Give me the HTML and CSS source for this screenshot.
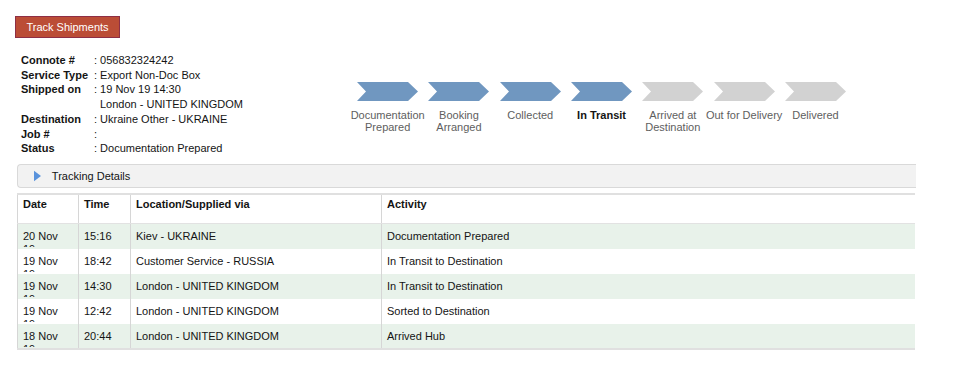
FILE: index.html
```html
<!DOCTYPE html>
<html>
<head>
  <title>Track Shipments</title>
  <link rel="stylesheet" href="styles.css">
</head>
<body>

  <button class="track-btn">Track Shipments</button>

  <div class="summary">
    <table class="info">
      <tr><th>Connote #</th><td>: 056832324242</td></tr>
      <tr><th>Service Type</th><td>: Export Non-Doc Box</td></tr>
      <tr><th>Shipped on</th><td>: 19 Nov 19 14:30<br><span class="indent">London - UNITED KINGDOM</span></td></tr>
      <tr><th>Destination</th><td>: Ukraine Other - UKRAINE</td></tr>
      <tr><th>Job #</th><td>:</td></tr>
      <tr><th>Status</th><td>: Documentation Prepared</td></tr>
    </table>

    <div class="progress">
      <div class="step done">
        <svg viewBox="0 0 61 19" width="61" height="19"><polygon points="0,0 51,0 61,9.5 51,19 0,19 9,9.5"/></svg>
        <span>Documentation<br>Prepared</span>
      </div>
      <div class="step done">
        <svg viewBox="0 0 61 19" width="61" height="19"><polygon points="0,0 51,0 61,9.5 51,19 0,19 9,9.5"/></svg>
        <span>Booking<br>Arranged</span>
      </div>
      <div class="step done">
        <svg viewBox="0 0 61 19" width="61" height="19"><polygon points="0,0 51,0 61,9.5 51,19 0,19 9,9.5"/></svg>
        <span>Collected</span>
      </div>
      <div class="step done current">
        <svg viewBox="0 0 61 19" width="61" height="19"><polygon points="0,0 51,0 61,9.5 51,19 0,19 9,9.5"/></svg>
        <span>In Transit</span>
      </div>
      <div class="step">
        <svg viewBox="0 0 61 19" width="61" height="19"><polygon points="0,0 51,0 61,9.5 51,19 0,19 9,9.5"/></svg>
        <span>Arrived at<br>Destination</span>
      </div>
      <div class="step">
        <svg viewBox="0 0 61 19" width="61" height="19"><polygon points="0,0 51,0 61,9.5 51,19 0,19 9,9.5"/></svg>
        <span>Out for Delivery</span>
      </div>
      <div class="step">
        <svg viewBox="0 0 61 19" width="61" height="19"><polygon points="0,0 51,0 61,9.5 51,19 0,19 9,9.5"/></svg>
        <span>Delivered</span>
      </div>
    </div>
  </div>

  <div class="details-bar">
    <svg class="toggle" viewBox="0 0 8 12" width="7" height="12"><polygon points="0,0 8,6 0,12"/></svg>
    Tracking Details
  </div>

  <table class="history">
    <thead>
      <tr><th class="c-date">Date</th><th class="c-time">Time</th><th class="c-loc">Location/Supplied via</th><th>Activity</th></tr>
    </thead>
    <tbody>
      <tr><td><div class="clip">20 Nov 19</div></td><td>15:16</td><td>Kiev - UKRAINE</td><td>Documentation Prepared</td></tr>
      <tr><td><div class="clip">19 Nov 19</div></td><td>18:42</td><td>Customer Service - RUSSIA</td><td>In Transit to Destination</td></tr>
      <tr><td><div class="clip">19 Nov 19</div></td><td>14:30</td><td>London - UNITED KINGDOM</td><td>In Transit to Destination</td></tr>
      <tr><td><div class="clip">19 Nov 19</div></td><td>12:42</td><td>London - UNITED KINGDOM</td><td>Sorted to Destination</td></tr>
      <tr><td><div class="clip">18 Nov 19</div></td><td>20:44</td><td>London - UNITED KINGDOM</td><td>Arrived Hub</td></tr>
    </tbody>
  </table>

</body>
</html>
```

FILE: styles.css
```css
body {
  font-family: "Liberation Sans", Arial, sans-serif;
  font-size: 11px;
  color: #141414;
  background: white;
  margin: 0;
  padding: 16px 0 0 15px;
}
.track-btn {
  display: block;
  font-family: inherit;
  font-size: 11px;
  color: white;
  background: #bb4d36;
  border: 1px solid #8e2f45;
  height: 22px;
  width: 105px;
  padding: 0;
  cursor: pointer;
}
.summary {
  display: flex;
  margin-top: 15px;
}
.info {
  border-collapse: collapse;
  margin-left: 6px;
  width: 331px;
  align-self: flex-start;
}
.info th, .info td {
  padding: 0;
  line-height: 14.7px;
  text-align: left;
  vertical-align: top;
  white-space: nowrap;
}
.info th {
  width: 73px;
  font-weight: bold;
}
.info .indent {
  padding-left: 6px;
}
.progress {
  display: flex;
  margin-top: 29px;
}
.step {
  width: 71.3px;
  display: flex;
  flex-direction: column;
  align-items: center;
  text-align: center;
  font-size: 11px;
  line-height: 12px;
  color: #5e5e5e;
  white-space: nowrap;
}
.step svg {
  fill: #d2d2d2;
  margin-bottom: 8px;
}
.step.done svg {
  fill: #7097c0;
}
.step.current span {
  color: #141414;
  font-weight: bold;
}
.details-bar {
  margin-top: 8px;
  margin-left: 2px;
  width: 882px;
  height: 22px;
  line-height: 22px;
  background: #f2f2f2;
  border: 1px solid #d9d9d9;
  border-right: none;
  border-radius: 4px 0 0 4px;
  padding-left: 16px;
}
.toggle {
  fill: #5a93dc;
  vertical-align: -2px;
  margin-right: 8px;
}
.history {
  margin-top: 5px;
  margin-left: 2px;
  width: 898px;
  border-collapse: collapse;
  border-top: 2px solid #e0e0e0;
  border-bottom: 2px solid #e0e0e0;
  table-layout: fixed;
}
.history th, .history td {
  text-align: left;
  vertical-align: top;
  border-left: 1px solid #d6d6d6;
  padding: 0 5px;
}
.history th {
  font-weight: bold;
  height: 30px;
  padding-top: 3px;
  box-sizing: border-box;
  border-bottom: 1px solid #e2e2e2;
}
.history td {
  height: 25px;
  padding-top: 6px;
  box-sizing: border-box;
}
.history .c-date { width: 61px; }
.history .c-time { width: 52px; }
.history .c-loc { width: 251px; }
.history tbody tr:nth-child(odd) {
  background: #e8f2ea;
}
.clip {
  width: 40px;
  height: 17px;
  line-height: 13px;
  overflow: hidden;
}
```
